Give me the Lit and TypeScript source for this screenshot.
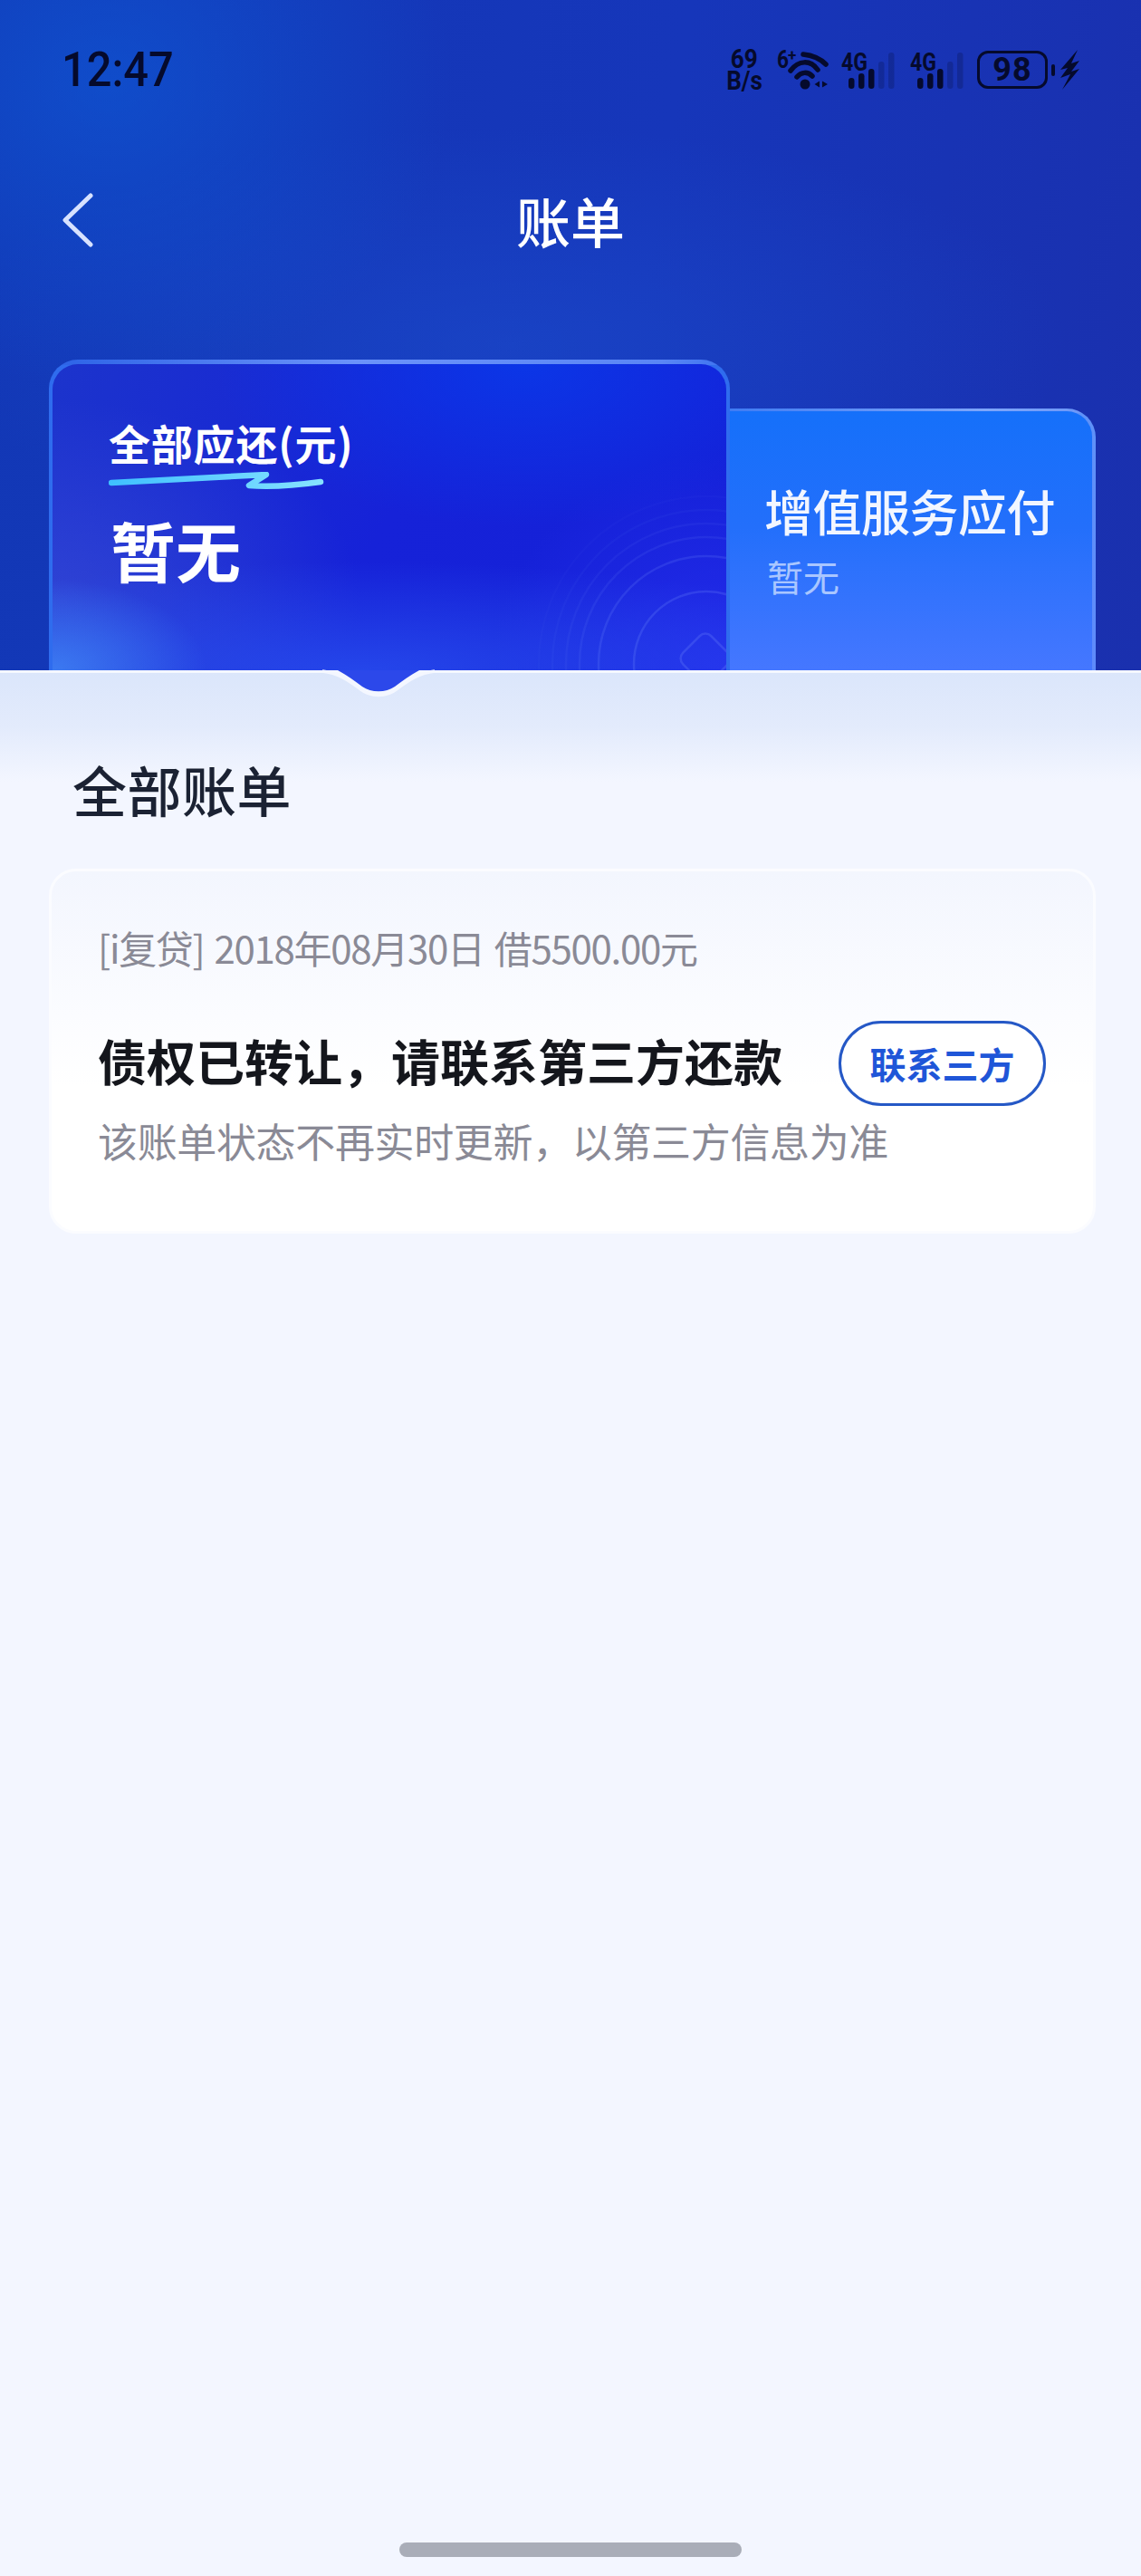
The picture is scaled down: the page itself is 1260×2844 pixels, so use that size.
import { LitElement, html, svg, css } from 'lit';
import { customElement } from 'lit/decorators.js';

const SIGNAL_BARS = [
  { x: 10, top: 32, dim: false },
  { x: 21, top: 27, dim: false },
  { x: 32, top: 22, dim: false },
  { x: 43, top: 14, dim: true },
  { x: 54, top: 4, dim: true },
];

const RINGS = [
  { r: 80, opacity: 0.2 },
  { r: 119, opacity: 0.17 },
  { r: 140, opacity: 0.1 },
  { r: 155, opacity: 0.07 },
  { r: 170, opacity: 0.05 },
  { r: 185, opacity: 0.03 },
];

@customElement('app-root')
export class AppRoot extends LitElement {
  static styles = css`
    :host {
      display: block;
      width: 1260px;
      height: 2844px;
      background: #f3f6ff;
      font-family: 'Noto Sans CJK SC', 'Noto Sans', sans-serif;
      overflow: hidden;
    }

    .page {
      display: flex;
      flex-direction: column;
      height: 2844px;
    }

    /* blue top part */
    .header {
      height: 740px;
      flex: none;
      display: flex;
      flex-direction: column;
      background:
        radial-gradient(ellipse 380px 340px at 120px 90px, rgba(14, 90, 215, 0.6), rgba(14, 90, 215, 0) 100%),
        radial-gradient(ellipse 620px 240px at 560px 380px, rgba(28, 76, 205, 0.55), rgba(28, 76, 205, 0) 100%),
        linear-gradient(100deg, #1238b6 0%, #1636ba 55%, #1a30ae 100%);
    }

    .status {
      height: 46px;
      margin-top: 54px;
      padding: 0 67px 0 68px;
      display: flex;
      justify-content: space-between;
      align-items: center;
      color: #050a2c;
      font-family: Roboto, sans-serif;
    }

    .time {
      font-size: 53px;
      line-height: 46px;
      font-weight: 500;
      transform: scaleX(0.92);
      transform-origin: left center;
    }

    .status-right {
      display: flex;
      align-items: center;
    }

    .speed {
      width: 42px;
      margin-right: 13px;
      display: flex;
      flex-direction: column;
      align-items: center;
      font-weight: 700;
      font-size: 29px;
      line-height: 24px;
    }

    .speed span {
      display: block;
      transform: scaleX(0.9);
    }

    .wifi {
      width: 60px;
      height: 50px;
      margin-top: -4px;
      margin-right: 11px;
    }

    .signal {
      width: 62px;
      height: 50px;
      margin-top: -4px;
      margin-right: 14px;
    }

    .signal:last-of-type {
      margin-right: 15px;
    }

    svg text {
      font-family: Roboto, sans-serif;
      font-weight: 700;
      fill: #050a2c;
    }

    .battery {
      box-sizing: border-box;
      width: 78px;
      height: 42px;
      border: 3.5px solid #050a2c;
      border-radius: 12px;
      display: flex;
      align-items: center;
      justify-content: center;
      font-size: 36px;
      font-weight: 700;
      letter-spacing: 1px;
    }

    .nub {
      width: 4px;
      height: 13px;
      margin: 0 6px 0 4px;
      border-radius: 2px;
      background: #050a2c;
    }

    .bolt {
      width: 22px;
      height: 44px;
    }

    .nav {
      margin-top: 108px;
      height: 70px;
      padding: 0 67px;
      display: grid;
      grid-template-columns: 1fr auto 1fr;
      align-items: center;
    }

    .back {
      width: 40px;
      height: 62px;
      display: block;
    }

    .title {
      color: #fff;
      font-size: 60px;
      line-height: 70px;
      font-weight: 500;
    }

    .cards {
      margin-top: auto;
      margin-left: 54px;
      width: 1156px;
      display: flex;
      align-items: flex-end;
    }

    .card-main {
      box-sizing: border-box;
      position: relative;
      width: 752px;
      height: 343px;
      padding: 5px 4px 0;
      border-radius: 32px 32px 0 0;
      background:
        linear-gradient(90deg, #2b62e6 0%, #6b93fa 45%, #5a86f5 90%, #3c72f0 100%) top / 100% 6px no-repeat,
        #2f6cee;
    }

    .card-main-inner {
      box-sizing: border-box;
      position: relative;
      overflow: hidden;
      height: 100%;
      padding: 60px 0 0 62px;
      border-radius: 28px 28px 0 0;
      background:
        radial-gradient(ellipse 170px 100px at 0 100%, rgba(66, 140, 248, 0.75), rgba(66, 140, 248, 0) 100%),
        radial-gradient(ellipse 620px 120px at 340px 100%, rgba(42, 82, 240, 0.75), rgba(42, 82, 240, 0) 100%),
        radial-gradient(ellipse 340px 220px at 0 260px, rgba(56, 76, 214, 0.7), rgba(56, 76, 214, 0) 100%),
        radial-gradient(ellipse 340px 180px at 520px 0, rgba(10, 56, 232, 0.9), rgba(10, 56, 232, 0) 100%),
        radial-gradient(ellipse 260px 240px at 100% 100%, rgba(40, 48, 240, 0.8), rgba(40, 48, 240, 0) 100%),
        linear-gradient(120deg, #1c34cc 0%, #1622d8 50%, #1420d8 100%);
    }

    .label {
      color: #fff;
      font-size: 46px;
      line-height: 52px;
      font-weight: 700;
      letter-spacing: 0.8px;
      white-space: nowrap;
    }

    .underline {
      display: block;
      width: 240px;
      height: 22px;
      margin-top: 7px;
    }

    .amount {
      margin-top: 21px;
      margin-left: 2px;
      color: #fff;
      font-size: 72px;
      line-height: 84px;
      font-weight: 700;
    }

    .rings {
      position: absolute;
      left: 0;
      top: 0;
      width: 744px;
      height: 338px;
    }

    .card-side {
      box-sizing: border-box;
      width: 404px;
      height: 289px;
      padding: 3px 4px 0 0;
      border-radius: 0 32px 0 0;
      background:
        linear-gradient(90deg, #3f7cf4 0%, #7ea6fb 70%, #6a95f8 100%) top / 100% 5px no-repeat,
        linear-gradient(180deg, #5f92f8, #5e8bfb);
    }

    .card-side-inner {
      box-sizing: border-box;
      height: 100%;
      padding: 77px 0 0 38px;
      border-radius: 0 28px 0 0;
      background: linear-gradient(180deg, #1570fa 0%, #236ffb 45%, #4577ff 100%);
    }

    .side-label {
      color: #f2f6ff;
      font-size: 54px;
      line-height: 66px;
      font-weight: 500;
      letter-spacing: -0.5px;
      white-space: nowrap;
    }

    .side-value {
      margin-top: 13px;
      margin-left: 3px;
      color: #a9c6ff;
      font-size: 40px;
      line-height: 52px;
    }

    /* light lower part */
    .sheet {
      flex: 1;
      position: relative;
      display: flex;
      flex-direction: column;
      border-top: 3px solid #f4f7ff;
      background: linear-gradient(180deg, #dbe6fb 0, #e3ebfc 60px, #f3f6ff 120px, #f3f6ff 100%);
    }

    .notch {
      position: absolute;
      left: 340px;
      top: -8px;
      width: 156px;
      height: 40px;
    }

    .heading {
      margin: 92px 0 0 80px;
      color: #1b2233;
      font-size: 60px;
      line-height: 72px;
      font-weight: 500;
      letter-spacing: 0.5px;
    }

    .bill {
      box-sizing: border-box;
      width: 1156px;
      height: 403px;
      margin: 52px 0 0 54px;
      padding: 57px 52px 0 51px;
      border: 3px solid #fbfcff;
      border-radius: 30px;
      background: linear-gradient(180deg, #f3f6fe 0%, #fbfcff 40%, #fff 60%);
    }

    .bill-meta {
      color: #8a8a96;
      font-size: 42px;
      line-height: 54px;
      letter-spacing: -1.3px;
      word-spacing: 3px;
      white-space: nowrap;
    }

    .bill-row {
      margin-top: 67px;
      height: 62px;
      display: flex;
      justify-content: space-between;
      align-items: center;
    }

    .bill-title {
      color: #14161c;
      font-size: 54px;
      line-height: 62px;
      font-weight: 700;
      white-space: nowrap;
    }

    .contact {
      box-sizing: border-box;
      flex: none;
      width: 229px;
      height: 94px;
      margin-top: 6px;
      border: 3px solid #2558c6;
      border-radius: 47px;
      display: flex;
      align-items: center;
      justify-content: center;
      color: #1f56d8;
      background: #fff;
      font-family: inherit;
      font-size: 40px;
      font-weight: 700;
      padding: 0;
    }

    .bill-note {
      margin-top: 27px;
      color: #8a8a96;
      font-size: 44px;
      line-height: 60px;
      letter-spacing: -0.35px;
      white-space: nowrap;
    }

    .home-bar {
      width: 378px;
      height: 16px;
      margin: auto auto 21px;
      border-radius: 8px;
      background: #a9adb8;
    }
  `;

  renderSignal() {
    return html`
      <svg class="signal" viewBox="0 -4 62 50">
        <text x="2" y="24" font-size="28" textLength="29" lengthAdjust="spacingAndGlyphs">4G</text>
        ${SIGNAL_BARS.map(b => svg`
          <rect x=${b.x} y=${b.top} width="6.5" height=${44 - b.top} rx="3.25"
            fill="#050a2c" fill-opacity=${b.dim ? 0.22 : 1}></rect>
        `)}
      </svg>
    `;
  }

  renderStatus() {
    return html`
      <div class="status">
        <div class="time">12:47</div>
        <div class="status-right">
          <div class="speed"><span>69</span><span>B/s</span></div>
          <svg class="wifi" viewBox="0 -4 60 50">
            <text x="2" y="21" font-size="28" textLength="13" lengthAdjust="spacingAndGlyphs">6</text>
            <text x="14" y="13" font-size="17">+</text>
            <g fill="none" stroke="#050a2c" stroke-width="5.5" stroke-linecap="round">
              <path d="M31 6 C41 7 50 11 56 17"></path>
              <path d="M17 24 C26 12 39 12 47 23"></path>
              <path d="M24 31 C29 25 36 25 41 30"></path>
            </g>
            <circle cx="33" cy="39" r="5.5" fill="#050a2c"></circle>
            <path d="M49 35.5 V42.5 L43.5 39 Z M52 35.5 V42.5 L58 39 Z" fill="#050a2c"></path>
          </svg>
          ${this.renderSignal()}
          ${this.renderSignal()}
          <div class="battery">98</div>
          <div class="nub"></div>
          <svg class="bolt" viewBox="0 0 22 44">
            <path d="M19 0 L0 22 L8 20 L0 31 L11 27 L2 44 L21 21 L12 24 L21 12 L12 15 Z" fill="#050a2c"></path>
          </svg>
        </div>
      </div>
    `;
  }

  render() {
    return html`
      <div class="page">
        <header class="header">
          ${this.renderStatus()}
          <div class="nav">
            <svg class="back" viewBox="0 0 40 62">
              <path d="M33 4 L5 31 L33 58" fill="none" stroke="#d7e2ff" stroke-width="5"
                stroke-linecap="round" stroke-linejoin="round"></path>
            </svg>
            <div class="title">账单</div>
            <div></div>
          </div>
          <div class="cards">
            <div class="card-main">
              <div class="card-main-inner">
                <svg class="rings" viewBox="58 402 744 338">
                  ${RINGS.map(r => svg`
                    <circle cx="780" cy="733" r=${r.r} fill="none" stroke="#7f9cff"
                      stroke-width="2.5" stroke-opacity=${r.opacity}></circle>
                  `)}
                  <rect x="757" y="705" width="44" height="44" rx="9" transform="rotate(45 779 727)"
                    fill="none" stroke="#7f9cff" stroke-width="2.5" stroke-opacity="0.22"></rect>
                </svg>
                <div class="label">全部应还(元)</div>
                <svg class="underline" viewBox="0 0 240 22">
                  <defs>
                    <linearGradient id="stroke-fill" x1="0" y1="0" x2="1" y2="0">
                      <stop offset="0" stop-color="#3fc0ff"></stop>
                      <stop offset="1" stop-color="#86e2ff"></stop>
                    </linearGradient>
                  </defs>
                  <path d="M3 12 C60 9 120 6 174 3 L155 15 C180 17 205 15 234 11" fill="none"
                    stroke="url(#stroke-fill)" stroke-width="6.5" stroke-linecap="round" stroke-linejoin="round"></path>
                </svg>
                <div class="amount">暂无</div>
              </div>
            </div>
            <div class="card-side">
              <div class="card-side-inner">
                <div class="side-label">增值服务应付</div>
                <div class="side-value">暂无</div>
              </div>
            </div>
          </div>
        </header>
        <main class="sheet">
          <svg class="notch" viewBox="0 0 156 40">
            <path d="M16 6 C34 8 46 17 57 25 C69 35 87 35 99 25 C110 17 122 8 140 6" fill="#f4f7ff"
              stroke="#f4f7ff" stroke-width="3.5"></path>
            <path d="M33 5 C44 11 52 17 60 23 C70 30 86 30 96 23 C104 17 112 11 123 5 Z" fill="#2c48ea"></path>
          </svg>
          <h1 class="heading">全部账单</h1>
          <section class="bill">
            <div class="bill-meta">[i复贷] 2018年08月30日 借5500.00元</div>
            <div class="bill-row">
              <div class="bill-title">债权已转让，请联系第三方还款</div>
              <button class="contact">联系三方</button>
            </div>
            <div class="bill-note">该账单状态不再实时更新，以第三方信息为准</div>
          </section>
          <div class="home-bar"></div>
        </main>
      </div>
    `;
  }
}
